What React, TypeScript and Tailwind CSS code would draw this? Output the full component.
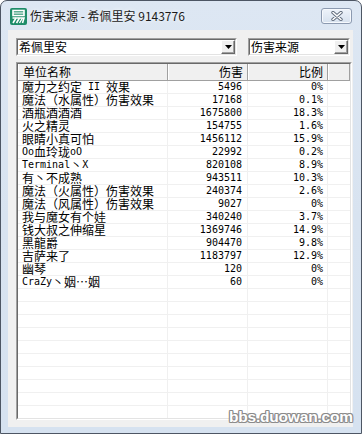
import React from "react";

type Row = [string, string, string];

const rows: Row[] = [
  ["魔力之约定 II 效果", "5496", "0%"],
  ["魔法（水属性）伤害效果", "17168", "0.1%"],
  ["酒瓶酒酒酒", "1675800", "18.3%"],
  ["火之精灵", "154755", "1.6%"],
  ["眼睛小真可怕", "1456112", "15.9%"],
  ["Oo血玲珑oO", "22992", "0.2%"],
  ["Terminal丶X", "820108", "8.9%"],
  ["有丶不成熟", "943511", "10.3%"],
  ["魔法（火属性）伤害效果", "240374", "2.6%"],
  ["魔法（风属性）伤害效果", "9027", "0%"],
  ["我与魔女有个娃", "340240", "3.7%"],
  ["钱大叔之伸缩星", "1369746", "14.9%"],
  ["黑龍爵", "904470", "9.8%"],
  ["吉萨来了", "1183797", "12.9%"],
  ["幽琴", "120", "0%"],
  ["CraZy丶姻…姻", "60", "0%"],
];

// SimSun-like mix: half-width ascii runs, full-width CJK runs
function Mixed({ text }: { text: string }) {
  const parts = text.split(/([\x00-\x7f]+)/).filter((p) => p.length > 0);
  return (
    <>
      {parts.map((p, i) =>
        /^[\x00-\x7f]+$/.test(p) ? (
          <span
            key={i}
            className="whitespace-pre font-['DejaVu_Sans_Mono',monospace] text-[10px] leading-[12px]"
          >
            {p}
          </span>
        ) : (
          <span
            key={i}
            className="font-['Noto_Sans_CJK_SC',sans-serif] text-[12px] leading-[12px]"
          >
            {p}
          </span>
        )
      )}
    </>
  );
}

function AppIcon() {
  return (
    <svg width="17" height="17" viewBox="0 0 17 17">
      <rect x="0" y="0" width="17" height="17" rx="2" fill="#1d8c68" />
      <rect x="3" y="2.5" width="11" height="5" fill="none" stroke="#fff" strokeWidth="1.6" />
      <line x1="3" y1="5" x2="14" y2="5" stroke="#fff" strokeWidth="1.2" />
      <path d="M2.5 10 H14 L12.5 15" fill="none" stroke="#fff" strokeWidth="1.6" />
      <line x1="6" y1="10" x2="3" y2="15" stroke="#fff" strokeWidth="1.6" />
      <line x1="9.5" y1="10" x2="6.5" y2="15" stroke="#fff" strokeWidth="1.6" />
      <line x1="12.5" y1="10" x2="9.5" y2="15" stroke="#fff" strokeWidth="1.4" />
    </svg>
  );
}

function CloseButton() {
  return (
    <div className="flex h-[16px] w-[31px] items-center justify-center rounded-[3px] border border-[#8c9ab0] bg-gradient-to-b from-[#eef3fa] to-[#d6e1ee] shadow-[inset_0_0_0_1px_#f6f9fd]">
      <svg width="12" height="10" viewBox="0 0 12 10">
        <path d="M2 1.5 L10 8.5 M10 1.5 L2 8.5" stroke="#5f6b7c" strokeWidth="3.4" strokeLinecap="round" />
        <path d="M2 1.5 L10 8.5 M10 1.5 L2 8.5" stroke="#ffffff" strokeWidth="1.6" strokeLinecap="round" />
      </svg>
    </div>
  );
}

function Combo({ value, className }: { value: string; className: string }) {
  return (
    <div
      className={`flex h-[18px] border-t border-l border-[#a0a0a0] border-r-white border-b-white border-r border-b ${className}`}
    >
      <div className="flex min-w-0 flex-1 border-t border-l border-[#696969] border-r border-b border-r-[#e3e3e3] border-b-[#e3e3e3] bg-white">
        <div className="flex-1 overflow-hidden pl-[1px] text-[12px] leading-[14px] text-black font-['Noto_Sans_CJK_SC',sans-serif]">
          {value}
        </div>
        <div className="flex w-[14px] items-center justify-center border-t border-l border-white border-r border-b border-r-[#696969] border-b-[#696969] bg-[#f0f0f0] shadow-[inset_-1px_-1px_0_#a0a0a0]">
          <svg width="7" height="4" viewBox="0 0 7 4">
            <path d="M0 0 H7 L3.5 4 Z" fill="#000" />
          </svg>
        </div>
      </div>
    </div>
  );
}

function HeaderCell({
  label,
  className,
  align = "left",
}: {
  label: string;
  className: string;
  align?: "left" | "right";
}) {
  return (
    <div
      className={`flex h-full items-center border-l border-white border-r border-r-[#a0a0a0] text-[12px] leading-[14px] text-black font-['Noto_Sans_CJK_SC',sans-serif] ${
        align === "right" ? "justify-end pr-[4px]" : "pl-[4px]"
      } ${className}`}
    >
      {label}
    </div>
  );
}

export default function App() {
  const filler = Array.from({ length: 12 }, (_, i) => i);

  return (
    <div className="relative h-[434px] w-[362px] overflow-hidden bg-white">
      <div className="flex h-full flex-col rounded-t-[7px] border border-[#4d5664] bg-gradient-to-b from-[#dde7f3] via-[#d8e3f0] to-[#d6e2f0]">
        {/* title bar */}
        <div className="flex h-[29px] shrink-0 items-center pl-[9px] pr-[9px] pt-[1px]">
          <AppIcon />
          <div className="ml-[3px] flex-1 text-[12px] text-[#1b1b1b] font-['Noto_Sans_CJK_SC',sans-serif] [text-shadow:0_0_4px_#ffffff]">
            伤害来源 - 希佩里安 9143776
          </div>
          <CloseButton />
        </div>

        {/* client */}
        <div className="mb-[6px] ml-[7px] mr-[8px] flex min-h-0 flex-1 flex-col bg-[#f0f0f0] pl-[8px] pr-[1px] pt-[8px] pb-[7px]">
          <div className="flex shrink-0 gap-[11px]">
            <Combo value="希佩里安" className="w-[221px]" />
            <Combo value="伤害来源" className="w-[102px]" />
          </div>

          <div className="mt-[6px] flex min-h-0 flex-1 flex-col border-t border-l border-[#a0a0a0] border-r border-b border-r-white border-b-white">
            <div className="flex min-h-0 flex-1 flex-col overflow-hidden border-t border-l border-[#696969] border-r border-b border-r-[#e3e3e3] border-b-[#e3e3e3] bg-white">
              {/* header */}
              <div className="flex h-[17px] shrink-0 border-b border-[#a0a0a0] bg-[#f0f0f0]">
                <HeaderCell label="单位名称" className="w-[150px]" />
                <HeaderCell label="伤害" className="w-[80px]" align="right" />
                <HeaderCell label="比例" className="w-[80px]" align="right" />
                <HeaderCell label="" className="flex-1" />
              </div>

              {/* rows */}
              {rows.map(([name, dmg, pct]) => (
                <div key={name} className="flex h-[13px] shrink-0 border-b border-[#f0f0f0] leading-[12px] text-black">
                  <div className="flex w-[150px] items-center overflow-hidden whitespace-nowrap border-r border-[#f0f0f0] pl-[4px]">
                    <Mixed text={name} />
                  </div>
                  <div className="flex w-[80px] items-center justify-end border-r border-[#f0f0f0] pr-[5px]">
                    <Mixed text={dmg} />
                  </div>
                  <div className="flex w-[80px] items-center justify-end border-r border-[#f0f0f0] pr-[4px]">
                    <Mixed text={pct} />
                  </div>
                  <div className="flex-1" />
                </div>
              ))}
              {filler.map((i) => (
                <div key={i} className="flex h-[13px] shrink-0 border-b border-[#f0f0f0]">
                  <div className="w-[150px] border-r border-[#f0f0f0]" />
                  <div className="w-[80px] border-r border-[#f0f0f0]" />
                  <div className="w-[80px] border-r border-[#f0f0f0]" />
                  <div className="flex-1" />
                </div>
              ))}
            </div>
          </div>
        </div>
      </div>

      {/* forum watermark */}
      <div className="absolute left-[229px] top-[405px] text-[15.5px] font-bold tracking-[-0.2px] text-white font-['Liberation_Sans',sans-serif] [text-shadow:1px_0_0_#8a8a8a,-1px_0_0_#8a8a8a,0_1px_0_#8a8a8a,0_-1px_0_#8a8a8a,1px_1px_0_#9a9a9a,-1px_-1px_0_#9a9a9a,1px_-1px_0_#9a9a9a,-1px_1px_0_#9a9a9a]">
        bbs.duowan.com
      </div>
    </div>
  );
}
